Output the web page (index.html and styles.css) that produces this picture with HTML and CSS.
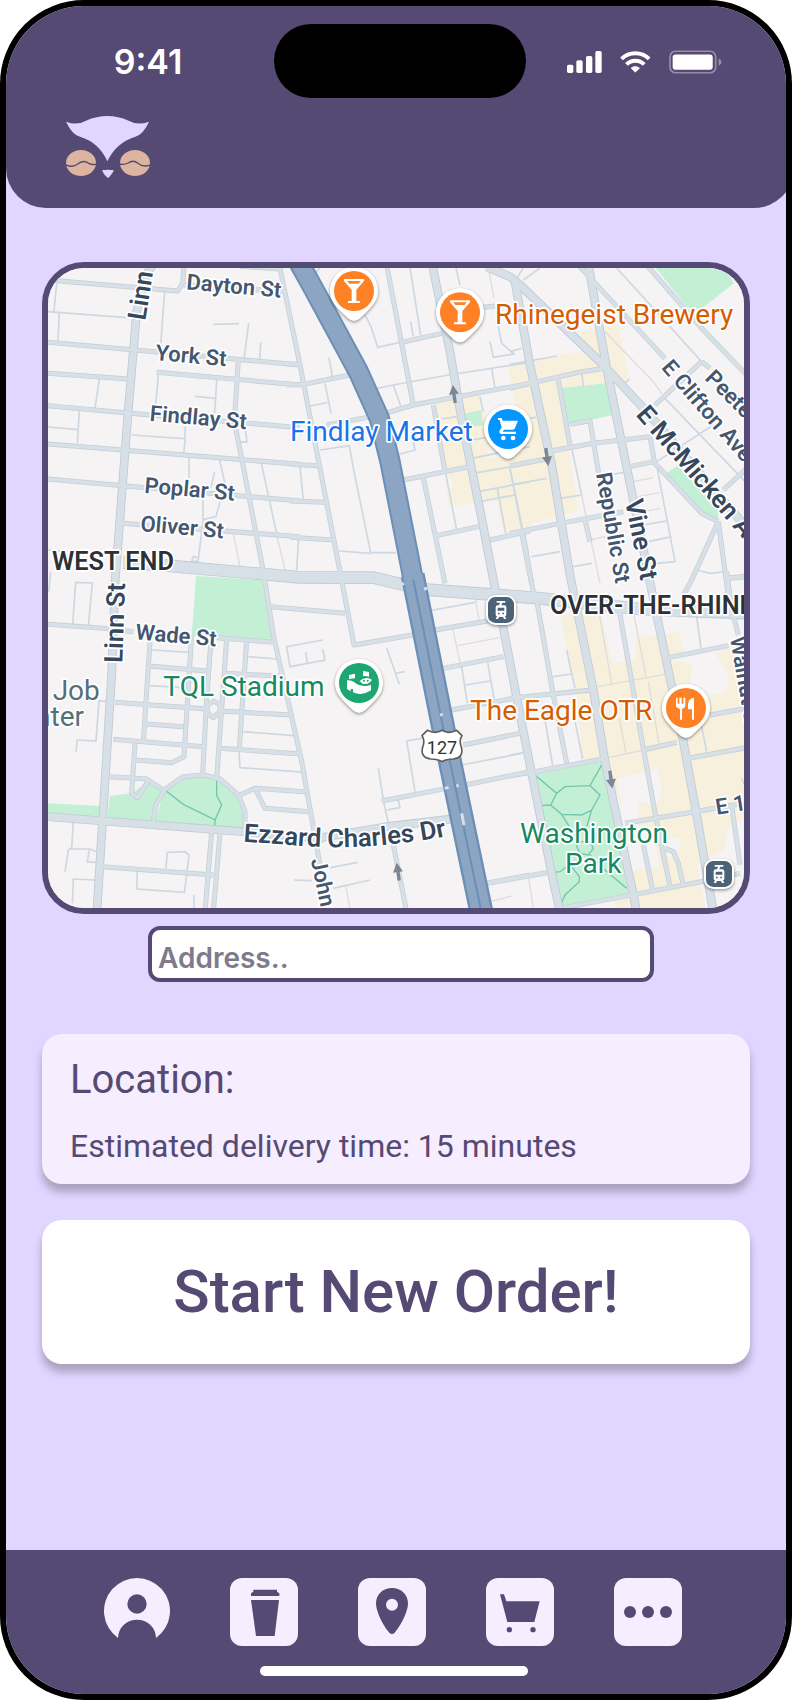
FILE: index.html
```html
<!DOCTYPE html>
<html lang="en">
<head>
<meta charset="utf-8">
<meta name="viewport" content="width=device-width, initial-scale=1">
<title>Delivery</title>
<link rel="stylesheet" href="styles.css">
</head>
<body>
<div class="phone">
  <header class="header">
    <div class="status">
      <div class="status-time">9:41</div>
      <div class="island"></div>
      <div class="status-icons">
        <svg width="35" height="22" viewBox="0 0 105 66" fill="#fff" aria-hidden="true">
          <rect x="0" y="41" width="19" height="25" rx="5"/><rect x="28" y="28" width="19" height="38" rx="5"/>
          <rect x="57" y="15" width="19" height="51" rx="5"/><rect x="85" y="0" width="19" height="66" rx="5"/>
        </svg>
        <svg width="31" height="22" viewBox="0 0 93 67" fill="none" stroke="#fff" stroke-width="12" aria-hidden="true">
          <path d="M4 24A60 60 0 0 1 88 24M19 41A38 38 0 0 1 73 41"/>
          <path d="M33 52Q46 42 59 52L46 65Z" fill="#fff" stroke="#fff" stroke-width="2" stroke-linejoin="round"/>
        </svg>
        <svg width="53" height="24" viewBox="0 0 160 71" aria-hidden="true">
          <rect x="3" y="3" width="138" height="65" rx="17" fill="none" stroke="#fff" stroke-opacity=".38" stroke-width="5"/>
          <rect x="11" y="13" width="121" height="46" rx="9" fill="#fff"/>
          <path d="M150 24Q158 28 158 36T150 47Z" fill="#fff" fill-opacity=".4"/>
        </svg>
      </div>
    </div>
    <svg class="logo" viewBox="0 0 252 186" role="img" aria-label="Owl">
      <path fill="#e1d6ff" d="M0 17Q32 30 60 14Q124 -14 188 14Q216 30 249 17Q232 55 208 62Q150 80 124 136Q100 80 42 62Q20 58 0 17Z"/>
      <path fill="#e1d6ff" d="M108 163Q126 160 144 163Q140 172 130 183Q126 188 122 183Q112 174 108 163Z"/>
      <g fill="#dcb49f"><ellipse cx="45" cy="141" rx="45" ry="39"/><ellipse cx="207" cy="141" rx="45" ry="39"/></g>
      <path fill="none" stroke="#554a73" stroke-width="4" d="M-2 146Q20 156 34 145Q52 130 68 142Q78 148 94 144M158 144Q176 147 186 141Q202 130 216 142Q230 155 254 147"/>
    </svg>
  </header>

  <main class="main">
    <div class="map">
      <svg class="map-art" viewBox="0 0 2088 1920" preserveAspectRatio="xMidYMid slice" role="img" aria-label="Map of Over-the-Rhine and the West End">
        <defs>
          <g id="minor">
            <path transform="translate(-24 -39)" d="M24 75L413 108L428 85L432 30M432 90L735 110M600 34L720 42M24 262L285 285L780 330M24 355L265 372M350 352L780 390M24 452L330 480L780 518M24 567L780 628M24 672L300 697L780 738M245 805L780 845M595 315L583 500L605 610L672 960L700 1140L785 1520L840 1830M718 30L780 330L900 950L942 1170L1130 1138"/>
            <path transform="translate(726 -39)" d="M290 30L370 450M-10 328H22M-10 390L40 388L180 360M335 262L455 235M285 475L370 450L720 385M110 510L245 485M0 628L85 632M0 738L105 742M0 847L130 855M340 675L540 635M430 450L465 650M400 668L465 985M440 842L565 815M600 855L720 828M700 840L725 985M580 157L615 153"/>
            <path transform="translate(1386 -39)" d="M205 30L265 95L465 310M410 30L575 220L710 360M0 400L60 385L215 350L285 340M575 320L435 450M575 320L600 340M110 590L250 565L420 545L435 630M180 508L240 497L270 680M145 375L180 570M0 835L150 805L340 770M225 795L240 860M360 635L430 620M435 625L575 775L625 800M625 800L540 985L520 1020M625 800L660 1060M660 970L710 965M710 640L640 705M35 835L75 1035M0 632L110 612"/>
            <path transform="translate(-24 921)" d="M24 148L190 160L280 170M530 188L705 202M330 200L310 500M455 182L432 545L395 563L285 555M330 273L500 288M512 210L500 370L488 600M560 190L530 610M620 195L598 520M555 295L730 304M225 382L500 402M540 408L755 420M318 447L430 455M220 493L490 515M540 520L785 537M285 505L275 655L292 668L325 618M210 605L320 612L370 645M340 740L347 690L375 643L430 605L490 600L540 612L595 660L615 710V760M600 660L645 640L795 650M645 640L675 700L805 710M188 875L520 900M515 770L495 1010M540 775L520 1010M690 95L915 115M522 378L540 390V410L520 428L503 415V390Z"/>
            <path transform="translate(726 921)" d="M435 165L610 135M460 280L640 245M485 405L670 370M520 510L690 475M275 678L470 640M525 630L720 590M590 925L720 900M310 810L350 1010"/>
            <path transform="translate(1386 921)" d="M0 602L75 590L280 552M0 370L245 345M80 75L130 360L170 565M325 90L400 520L440 740L480 935M400 810L430 955M465 820L490 830L505 865L520 930M400 525L500 502M475 248L655 212M535 550L710 518M600 420L710 400M345 745L555 710L700 685M-70 925L110 893M150 1000L375 958L600 915L690 895M665 690L690 870M650 -10L665 100L685 180M655 10L710 3"/>
          </g>
          <g id="major">
            <path transform="translate(-24 -39)" d="M345 20L318 60L290 170L262 500L225 985L215 1260L170 1980"/>
            <path transform="translate(726 -39)" d="M425 20L478 280L520 520L575 790L615 1000L640 1120L700 1430L790 1880L810 1970"/>
            <path transform="translate(1386 -39)" d="M-70 35L0 65L30 90L280 330L410 470L720 830M235 30L290 340L375 760L440 1080L520 1460L560 1680L610 1970M15 80L60 330L125 630L180 960L250 1305L285 1520L370 1920L382 1980"/>
            <path transform="translate(-24 921)" d="M0 723L190 738L610 770L850 790"/>
            <path transform="translate(726 921)" d="M50 795L290 755L520 728"/>
          </g>
          <path id="arterial" transform="translate(-24 -39)" d="M250 922L380 932L780 967L1000 968L1150 1003L1400 1022L1500 1030L1800 1062L2130 1075"/>
          <path id="highway" transform="translate(726 -39)" d="M-30 -80L20 10L70 100L205 350L268 490L300 620L372 985"/>
          <path id="highway-south" transform="translate(726 -39)" d="M368 960L480 1520L574 1970"/>
          <path id="pin" d="M-66 28A72 72 0 1 1 66 28Q58 46 18 82Q0 98 -18 82Q-58 46 -66 28Z"/>
          <path id="martini" d="M-30 -36H30V-30L7 -4V30H18V36H-18V30H-7V-4L-30 -30Z"/>
          <path id="oneway" d="M0 -28L15 0H5V26H-5V0H-15Z"/>
          <g id="tram">
            <rect x="-42" y="-42" width="84" height="84" rx="25" fill="#4b6277" stroke="#fff" stroke-width="6"/>
            <path fill="#fff" d="M-13 -27H13V-22H4L1 -14H10Q16 -14 16 -8V14Q16 18 12 19L16 27H9L6 21H-6L-9 27H-16L-12 19Q-16 18 -16 14V-8Q-16 -14 -10 -14H-6L-3 -22H-13Z"/>
            <path fill="#4b6277" d="M-10 -7H10V2H-10ZM-9 8H-4V13H-9ZM4 8H9V13H4Z"/>
          </g>
          <path id="ezzard" d="M586 1721L706 1729Q866 1746 1026 1729T1240 1692"/>
        </defs>

        <rect width="2088" height="1920" fill="#f5f3f4"/>

        <g fill="#f7f0dc">
          <path transform="translate(726 -39)" d="M435 445L570 420L600 550L590 610L720 600V820L640 830L620 730L570 735L545 748L475 752L470 715L490 690L475 655L455 640ZM655 340L720 325V440L680 450Z"/>
          <path transform="translate(1386 -39)" d="M0 330L215 288L212 230L325 208L358 380L290 385L148 400L205 768L0 822V600L45 570L10 400Z"/>
          <path transform="translate(1386 921)" d="M150 120L270 105L308 265L375 255L380 190L510 172L520 230L480 255L545 265L540 330L560 365L650 355L655 300L615 235L660 220L710 235V720L650 760L645 820L560 870L585 1000H315L312 975L375 960L370 885L450 875L430 760L350 745L290 555H220L195 340Z"/>
        </g>
        <path fill="#f5f3f4" transform="translate(1386 921)" d="M320 610L445 580L455 655L440 690L385 680V735L345 745ZM450 800L505 785L515 820L480 850Z"/>

        <g fill="#c3f0d5">
          <path transform="translate(726 -39)" d="M518 478L573 465L580 510L525 518Z"/>
          <path transform="translate(1386 -39)" d="M430 30H640L672 85L570 165L530 155ZM150 400L285 385L308 480L175 510ZM470 655L505 630L625 765V795L575 775Z"/>
          <path transform="translate(-24 921)" d="M468 3L665 15L703 195L455 182ZM24 685L180 693L178 735L24 722ZM210 662L275 655L325 620L370 645L340 740L202 728ZM375 645L430 608L490 600L540 612L600 665L618 760L342 742Z"/>
          <path transform="translate(1386 921)" d="M78 595L278 560L355 958L150 995Z"/>
        </g>

        <g class="trail">
          <path transform="translate(-24 921)" d="M375 645L430 688L525 735V755M525 735L545 690L530 662V612"/>
          <path transform="translate(1386 921)" d="M75 600L140 655L165 635L240 632L270 660L245 705L215 720L155 718L122 690L140 655M122 690L90 692M240 632L278 565M155 718L178 755M245 705L230 755M205 800H240L250 820L235 840L210 835L200 815ZM130 892L150 890L170 875M185 875L208 905V920L165 960L152 990M240 840L285 885L350 940"/>
        </g>

        <g class="alley">
          <path transform="translate(-24 -39)" d="M580 835L600 935M710 840L735 945"/>
          <path transform="translate(1386 -39)" d="M-65 39L-48 130M285 230L430 380L455 415M215 720L270 985M370 680L430 668M385 725L450 712M400 770L450 760M240 855L300 842"/>
          <path transform="translate(726 921)" d="M555 65L568 140M488 160L512 270M503 212L630 188M168 935L180 1000M600 980L665 963"/>
          <path transform="translate(1386 921)" d="M265 100L305 325M370 110L408 305M415 320L448 510M328 430L348 535M262 335L465 298M295 548L400 525M55 905L70 998"/>
        </g>

        <g class="lane">
          <path transform="translate(-24 -39)" d="M50 85L42 170M24 170L260 188M58 172L54 258M374 110L362 270M520 208L597 206M626 205L612 312M662 262L659 315M178 372L165 460M118 468L112 564M24 516L115 524M356 350L347 450M530 375L527 430L465 424M527 430L523 480M275 540L436 551L431 595M436 515L434 551M615 520L621 560L598 562M447 602V670M538 612L556 690M524 650L512 700M664 625L710 835M540 740L528 785L488 794M489 735V800L474 920L455 918L460 905L472 907M776 845L770 945M24 885L60 888"/>
          <path transform="translate(726 -39)" d="M360 39L392 240M498 39L510 90M225 180L243 215L263 277L330 262M362 200L370 245M117 308L127 365M105 385L123 475M60 453L112 443M248 403L310 390L475 360L720 322M310 390L333 455M605 340L615 400M70 60L90 39M455 492L500 485M570 425L580 470M90 585L178 572L190 640L242 893H318M148 888L242 895M30 635L40 735M365 530L375 585L320 600M545 555L590 547M545 610L720 575M550 655L720 625M565 710L720 680M570 740L675 720M660 640L695 820M622 700L647 835M467 655L500 825M600 260L610 307L672 297L635 265L622 200M660 290L695 280"/>
          <path transform="translate(1386 -39)" d="M0 328L140 303M320 39L575 320M465 430L710 685M440 620L610 510M185 580L215 720M215 350L220 395M345 385L358 372M310 658L360 648M440 630L495 920L440 925M400 810L475 797M415 860L485 845M65 905L150 890M150 730L215 720M190 935L245 925M0 690L110 670M0 640L40 835M60 490L78 487M560 945L600 955L645 950M20 70L40 39M40 75L90 39"/>
          <path transform="translate(-24 921)" d="M98 150L107 22L157 24L145 155M32 -10L26 50M335 225L447 232M330 332L430 338M625 245L710 252M205 380L177 378L168 498L112 495L108 530M610 470L760 482M597 530L600 578L800 592M848 195L740 215L750 275L855 255L848 222M797 232L802 265M100 740L95 820L85 825L75 890M90 822H150L170 830M148 825L142 860L168 862M97 985L100 912L165 915M378 880L382 832L435 830L447 840L440 900L433 952L290 942L292 885M462 960V1000"/>
          <path transform="translate(726 921)" d="M290 218L328 328M318 295L343 290M395 490L350 498L375 650M265 580L280 675L295 745M325 675L330 698L290 705M415 108L555 82M515 275L532 385M593 262L612 370M525 330L600 318M515 570L695 535M110 880L203 862M12 915L65 917M130 940L240 915"/>
          <path transform="translate(1386 921)" d="M100 405L128 572M130 305L185 297M170 225L185 297L195 340M195 440L218 552M575 455L590 530M560 125L573 220M60 0L68 30M0 480L25 478M0 540L40 533M695 610L708 640"/>
        </g>

        <use href="#minor" class="road minor-edge"/>
        <use href="#arterial" class="road arterial-edge"/>
        <use href="#major" class="road major-edge"/>
        <use href="#minor" class="road minor-fill"/>
        <use href="#arterial" class="road arterial-fill"/>
        <use href="#major" class="road major-fill"/>
        <use href="#highway" class="road highway-edge"/>
        <use href="#highway-south" class="road south-edge"/>
        <use href="#highway" class="road highway-fill"/>
        <use href="#highway-south" class="road south-fill"/>
        <path class="highway-median" d="M1096 935L1206 1481L1300 1931"/>
        <path class="crossing" d="M1060 950L1068 946M1128 963L1138 961M1176 1341L1184 1339M1190 1561L1202 1558M1225 1554L1232 1552M1241 1636L1248 1672"/>

        <g fill="#7c8791">
          <use href="#oneway" transform="translate(1218 379) rotate(-8)"/>
          <use href="#oneway" transform="translate(1497 566) rotate(172)"/>
          <use href="#oneway" transform="translate(1689 1534) rotate(172)"/>
          <use href="#oneway" transform="translate(1050 1812) rotate(-8)"/>
        </g>

        <g class="label street">
          <text transform="translate(414 64) rotate(5)">Dayton St</text>
          <text transform="translate(321 276) rotate(5)">York St</text>
          <text transform="translate(304 458) rotate(5)">Findlay St</text>
          <text transform="translate(288 674) rotate(5)">Poplar St</text>
          <text transform="translate(276 789) rotate(5)">Oliver St</text>
          <text transform="translate(261 1114) rotate(5)">Wade St</text>
          <text transform="translate(1838 300) rotate(49)">E Clifton Ave</text>
          <text transform="translate(1968 333) rotate(45)">Peete St</text>
          <text transform="translate(1644 617) rotate(80)">Republic St</text>
          <text transform="translate(788 1775) rotate(78)">John St</text>
          <text transform="translate(2046 1110) rotate(80)">Walnut St</text>
          <text transform="translate(2006 1640) rotate(-9)">E 12th St</text>
        </g>
        <g class="label avenue">
          <text transform="translate(292 159) rotate(-81)">Linn St</text>
          <text transform="translate(223 1185) rotate(-88)">Linn St</text>
          <text transform="translate(1762 441) rotate(49)">E McMicken Ave</text>
          <text transform="translate(1731 698) rotate(79)">Vine St</text>
          <text><textPath href="#ezzard">Ezzard Charles Dr</textPath></text>
        </g>
        <g class="label district">
          <text x="12" y="907">WEST END</text>
          <text x="1506" y="1037">OVER-THE-RHINE</text>
        </g>
        <g class="label place">
          <text class="civic" x="14" y="1296">Job</text>
          <text class="civic" x="108" y="1373" text-anchor="end">Center</text>
          <text class="food" x="1341" y="168">Rhinegeist Brewery</text>
          <text class="shop" x="726" y="518">Findlay Market</text>
          <text class="green" x="346" y="1284">TQL Stadium</text>
          <text class="food" x="1266" y="1356">The Eagle OTR</text>
          <text class="green" x="1638" y="1724" text-anchor="middle">Washington</text>
          <text class="green" x="1636" y="1814" text-anchor="middle">Park</text>
        </g>

        <g transform="translate(1182 1433)">
          <path fill="#fff" stroke="#5c5c5c" stroke-width="5" stroke-linejoin="round" d="M-44 -46Q-20 -34 0 -46Q20 -34 44 -46L60 -30Q50 -14 58 4Q66 36 34 40Q12 40 0 48Q-12 40 -34 40Q-66 36 -58 4Q-50 -14 -60 -30Z"/>
          <text class="shield" y="24" text-anchor="middle">127</text>
        </g>

        <g class="marker" transform="translate(1359 1026)"><use href="#tram"/></g>
        <g class="marker" transform="translate(2013 1818)"><use href="#tram"/></g>
        <g class="marker" transform="translate(918 69)">
          <use href="#pin"/><circle r="60" fill="#ff8126"/><use href="#martini"/><path fill="#ff8126" d="M-20 -30H20L14 -22H-14Z"/>
        </g>
        <g class="marker" transform="translate(1236 133)">
          <use href="#pin"/><circle r="60" fill="#ff8126"/><use href="#martini"/><path fill="#ff8126" d="M-20 -30H20L14 -22H-14Z"/>
        </g>
        <g class="marker" transform="translate(1380 483)">
          <use href="#pin"/><circle r="60" fill="#0396ff"/>
          <path d="M-30 -33H-19L-16 -25H30L20 -1Q18 2 14 2H-12L-16 8H24V15H-20Q-29 12 -25 5L-19 -5L-25 -27H-30Z"/><circle cx="-14" cy="27" r="7"/><circle cx="15" cy="27" r="7"/>
        </g>
        <g class="marker" transform="translate(933 1245)">
          <use href="#pin"/><circle r="60" fill="#1ea672"/>
          <path d="M-30 -24L-12 -28V-14L-30 -12ZM12 -36L30 -33V-19L12 -22ZM-36 -8Q-24 -10 -14 -2Q4 14 36 6V22Q10 40 -18 28V18H-25V25L-36 18Z"/>
          <path stroke="#1ea672" stroke-width="4" d="M-2 -6Q20 -26 42 -10Q30 10 10 4Z"/>
          <g fill="#1ea672"><circle cx="15" cy="-7" r="3"/><circle cx="26" cy="-7" r="3"/></g>
        </g>
        <g class="marker" transform="translate(1914 1320)">
          <use href="#pin"/><circle r="60" fill="#ff8126"/>
          <path d="M-30 -31H-25V-13H-20V-31H-13V-13H-8V-31H-2V-8Q-2 0 -12 3V35H-18V3Q-30 0 -30 -8ZM24 -31V35H18V4H6V-12Q8 -30 24 -31Z"/>
        </g>
      </svg>
    </div>

    <input class="address" type="text" placeholder="Address.." aria-label="Address">

    <section class="card">
      <h2 class="card-title">Location:</h2>
      <p class="card-text">Estimated delivery time: 15 minutes</p>
    </section>

    <button class="order" type="button">Start New Order!</button>
  </main>

  <footer class="footer">
    <nav class="nav" aria-label="Main">
      <a class="nav-link" href="#profile" aria-label="Profile">
        <svg viewBox="0 0 204 204"><path fill="#f6edff" d="M48 180A99 99 0 1 1 162 180A57 55 0 0 0 48 180Z"/><circle cx="105" cy="78" r="29"/></svg>
      </a>
      <a class="nav-link tile" href="#menu" aria-label="Menu">
        <svg viewBox="0 0 204 204"><path d="M70 35H141V41L148 46V54H63V46L70 41ZM63 66H147L134 174H78Z"/></svg>
      </a>
      <a class="nav-link tile" href="#location" aria-label="Location">
        <svg viewBox="0 0 204 204"><path fill-rule="evenodd" d="M102 30C130 30 150 50 150 76C150 104 124 150 110 164Q102 172 94 164C80 150 54 104 54 76C54 50 74 30 102 30ZM102 62A18 18 0 1 0 102 98A18 18 0 1 0 102 62Z"/></svg>
      </a>
      <a class="nav-link tile" href="#cart" aria-label="Cart">
        <svg viewBox="0 0 204 204"><path d="M42 49H54L61 70H161L145 132H64Z"/><circle cx="70" cy="155" r="8"/><circle cx="141" cy="155" r="8"/></svg>
      </a>
      <a class="nav-link tile" href="#more" aria-label="More">
        <svg viewBox="0 0 204 204"><circle cx="48" cy="102" r="18"/><circle cx="102" cy="102" r="18"/><circle cx="156" cy="102" r="18"/></svg>
      </a>
    </nav>
    <div class="home-bar"></div>
  </footer>
</div>
</body>
</html>
```
FILE: styles.css
```css
* {
  box-sizing: border-box;
}

body {
  margin: 0;
  background: #fff;
  font-family: Roboto, "Liberation Sans", sans-serif;
  color: #554a73;
}

.phone {
  display: flex;
  flex-direction: column;
  min-height: 100vh;
  overflow: hidden;
  border: 6px solid #000;
  border-radius: 84px;
  background: #e1d6ff;
}

/* Header and status bar */
.header {
  margin-right: -8px;
  padding: 18px 8px 30px;
  border-radius: 0 0 40px 40px;
  background: #554a73;
}

.status {
  display: grid;
  grid-template-columns: 1fr 252px 1fr;
  align-items: center;
}

.status-time {
  padding: 2px 0 0 8px;
  font: 600 34px/40px Inter, sans-serif;
  text-align: center;
  color: #fff;
}

.island {
  height: 74px;
  border-radius: 37px;
  background: #000;
}

.status-icons {
  display: flex;
  justify-content: center;
  align-items: center;
  gap: 18px;
  padding: 2px 24px 0 0;
}

.logo {
  display: block;
  width: 84px;
  height: 62px;
  margin: 18px 0 0 52px;
}

/* Main content */
.main {
  display: flex;
  flex: 1;
  flex-direction: column;
  padding: 54px 36px;
}

.map {
  overflow: hidden;
  border: 6px solid #554a73;
  border-radius: 42px;
}

.map-art {
  display: block;
  width: 100%;
  aspect-ratio: 696 / 640;
}

.road,
.lane,
.alley,
.trail,
.highway-median,
.crossing {
  fill: none;
}

.road {
  stroke-linejoin: round;
}

.minor-edge { stroke: #c3ced6; stroke-width: 15px; }
.minor-fill { stroke: #d7dfe7; stroke-width: 11px; }
.major-edge { stroke: #c0cad3; stroke-width: 26px; }
.major-fill { stroke: #d7dfe7; stroke-width: 21px; }
.arterial-edge { stroke: #c0cad3; stroke-width: 38px; }
.arterial-fill { stroke: #d7dfe7; stroke-width: 33px; }
.highway-edge { stroke: #6c8fb5; stroke-width: 64px; }
.highway-fill { stroke: #8ba5c3; stroke-width: 52px; }
.south-edge { stroke: #6c8fb5; stroke-width: 72px; }
.south-fill { stroke: #8ba5c3; stroke-width: 58px; }
.highway-median { stroke: #6c8fb5; stroke-width: 6px; }
.crossing { stroke: #d7dfe7; stroke-width: 9px; }
.lane { stroke: #cdd8e2; stroke-width: 5px; }
.alley { stroke: #dddddd; stroke-width: 4px; }
.trail { stroke: #74c5aa; stroke-width: 4px; }

.label {
  stroke: #fff;
  stroke-width: 10px;
  stroke-linejoin: round;
  paint-order: stroke;
}

.street { font-size: 66px; font-weight: 600; fill: #45566f; }
.avenue { font-size: 77px; font-weight: 600; fill: #34475c; }
.district { font-size: 76px; font-weight: 600; fill: #2d3135; }
.place { font-size: 84px; }
.food { fill: #d65c00; }
.shop { fill: #1a73e8; }
.green { fill: #188860; }
.civic { fill: #546e7a; }
.shield { font-size: 54px; fill: #333; }

.marker {
  fill: #fff;
  filter: drop-shadow(0 4px 4px rgba(0, 0, 0, .4));
}

.address {
  height: 56px;
  margin: 12px 96px 0 106px;
  padding: 8px 6px 0;
  border: 4px solid #554a73;
  border-radius: 12px;
  background: #fff;
  font: 600 28px/40px Inter, sans-serif;
  color: #554a73;
}

.address::placeholder {
  color: #7f7a8c;
  opacity: 1;
}

.card {
  margin-top: 52px;
  padding: 22px 28px 18px;
  border-radius: 20px;
  background: #f6edff;
  box-shadow: 0 8px 8px rgba(0, 0, 0, .25);
}

.card-title {
  margin: 0;
  font-size: 40px;
  font-weight: 400;
  line-height: 48px;
}

.card-text {
  margin: 22px 0 0;
  font-size: 32px;
  font-weight: 400;
  line-height: 40px;
}

.order {
  margin-top: 36px;
  padding: 36px 28px;
  border: 0;
  border-radius: 20px;
  background: #fff;
  box-shadow: 0 8px 8px rgba(0, 0, 0, .25);
  font: 500 60px/72px Roboto, sans-serif;
  color: #554a73;
}

/* Bottom navigation */
.footer {
  padding: 28px 4px 18px 0;
  background: #554a73;
}

.nav {
  display: flex;
  justify-content: center;
  gap: 60px;
  padding-right: 4px;
}

.nav-link {
  width: 68px;
  height: 68px;
  border-radius: 12px;
  fill: #554a73;
}

.nav-link svg {
  display: block;
}

.tile {
  background: #f6edff;
}

.home-bar {
  width: 268px;
  max-width: 60%;
  height: 10px;
  margin: 20px auto 0;
  border-radius: 5px;
  background: #fff;
}
```
